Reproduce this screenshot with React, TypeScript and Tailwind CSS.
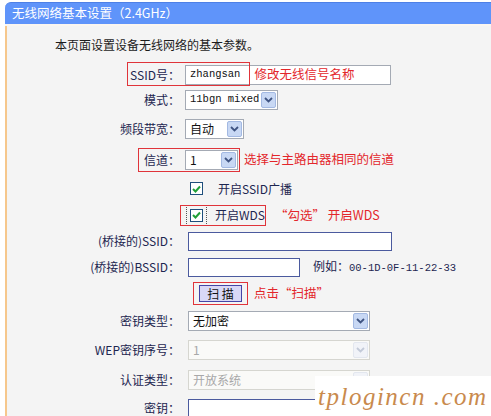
import React from 'react';

const cjk = { fontFamily: '"Noto Sans CJK SC", "Liberation Sans", sans-serif' };
const mono = { fontFamily: '"Liberation Mono", "Noto Sans CJK SC", monospace' };

const Arrow: React.FC<{ faded?: boolean }> = ({ faded }) => (
  <div
    className={`w-[15px] h-[16px] mr-[1px] rounded-[2px] border flex items-center justify-center ${
      faded ? 'bg-[#f1f3f8] border-[#e3e7ef]' : 'bg-[#c8d8f4] border-[#a3b9e2]'
    }`}
  >
    <svg width="9" height="6" viewBox="0 0 9 6">
      <path d="M1 1 L4.5 4.5 L8 1" fill="none" stroke={faded ? '#c3cad8' : '#3f5482'} strokeWidth="1.8" />
    </svg>
  </div>
);

const Select: React.FC<{ w: string; text: string; disabled?: boolean; monoText?: boolean }> = ({ w, text, disabled, monoText }) => (
  <div
    className={`${w} h-[20px] border flex items-center justify-between ${
      disabled ? 'bg-[#fafaf8] border-[#d6d6d0]' : 'bg-white border-[#a4aab4]'
    }`}
  >
    <span
      className={`pl-[4px] text-[12px] leading-none ${disabled ? 'text-[#a8a8a8]' : 'text-[#111]'}`}
      style={monoText ? { ...mono, fontSize: '10.5px' } : cjk}
    >
      {text}
    </span>
    <Arrow faded={disabled} />
  </div>
);

const Label: React.FC<{ children: React.ReactNode }> = ({ children }) => (
  <div className="w-[173px] shrink-0 text-right text-[12px] text-[#1d2650] leading-none" style={cjk}>
    {children}
  </div>
);

const Red: React.FC<{ children: React.ReactNode; className?: string }> = ({ children, className }) => (
  <span className={`text-[12.5px] text-[#e3262b] leading-none whitespace-nowrap ${className ?? ''}`} style={cjk}>
    {children}
  </span>
);

const Check: React.FC = () => (
  <div className="w-[13px] h-[13px] bg-white border border-[#1f4f7c] flex items-center justify-center">
    <svg width="9" height="8" viewBox="0 0 9 8">
      <path d="M1 4 L3.5 6.5 L8 1.5" fill="none" stroke="#21a038" strokeWidth="2" />
    </svg>
  </div>
);

export default function App() {
  return (
    <div className="w-[491px] h-[416px] bg-white relative overflow-hidden">
      <div className="ml-[5px] mt-[2px] h-[22px] bg-[#5f94fa] border-t border-[#4e80e6] rounded-tl-[6px] flex items-center pl-[7px]">
        <span className="text-white text-[12.5px] leading-none" style={cjk}>
          无线网络基本设置（2.4GHz）
        </span>
      </div>
      <div className="ml-[5px] h-[2px] bg-[#fbf6f0]" />
      <div className="ml-[5px] border-l-2 border-[#f6c78c] bg-[#f4f4f4] h-[400px]">
        <div className="h-[37px] flex items-center pl-[48px]">
          <span className="text-[12px] text-[#1c1c1c] leading-none" style={cjk}>
            本页面设置设备无线网络的基本参数。
          </span>
        </div>

        {/* SSID */}
        <div className="h-[23px] flex items-center relative">
          <Label>SSID号：</Label>
          <div className="ml-[5px] w-[206px] h-[20px] bg-white border border-[#a4aab4] flex items-center">
            <span className="pl-[4px] text-[#111] leading-none" style={{ ...mono, fontSize: '10.5px' }}>
              zhangsan
            </span>
            <Red className="ml-[14px]">修改无线信号名称</Red>
          </div>
          <div className="absolute left-[120px] top-[-1px] w-[123px] h-[24px] border border-[#e0343a]" />
        </div>

        {/* 模式 */}
        <div className="h-[27px] flex items-center">
          <Label>模式：</Label>
          <div className="ml-[5px]">
            <Select w="w-[93px]" text="11bgn mixed" monoText />
          </div>
        </div>

        {/* 频段带宽 */}
        <div className="h-[31px] flex items-center">
          <Label>频段带宽：</Label>
          <div className="ml-[5px]">
            <Select w="w-[59px]" text="自动" />
          </div>
        </div>

        {/* 信道 */}
        <div className="h-[31px] flex items-center relative">
          <Label>信道：</Label>
          <div className="ml-[5px]">
            <Select w="w-[53px]" text="1" />
          </div>
          <Red className="ml-[6px]">选择与主路由器相同的信道</Red>
          <div className="absolute left-[131px] top-[4px] w-[102px] h-[24px] border border-[#e0343a]" />
        </div>

        {/* SSID广播 */}
        <div className="h-[27px] flex items-center pl-[183px]">
          <Check />
          <span className="ml-[15px] text-[12px] text-[#1d2650] leading-none" style={cjk}>
            开启SSID广播
          </span>
        </div>

        {/* WDS */}
        <div className="h-[26px] flex items-center pl-[183px] relative">
          <div className="p-[3px] border border-dotted border-[#555] -ml-[4px]">
            <Check />
          </div>
          <span className="ml-[8px] text-[12px] text-[#1d2650] leading-none" style={cjk}>
            开启WDS
          </span>
          <Red className="ml-[10px]">“勾选” 开启WDS</Red>
          <div className="absolute left-[173px] top-[3px] w-[86px] h-[21px] border border-[#e0343a]" />
        </div>

        {/* 桥接SSID */}
        <div className="h-[26px] flex items-center">
          <Label>(桥接的)SSID：</Label>
          <div className="ml-[8px] w-[204px] h-[19px] bg-white border border-[#4b5a9e]" />
        </div>

        {/* 桥接BSSID */}
        <div className="h-[26px] flex items-center">
          <Label>(桥接的)BSSID：</Label>
          <div className="ml-[8px] w-[112px] h-[19px] bg-white border border-[#4b5a9e]" />
          <span className="ml-[13px] text-[12px] text-[#1d2650] leading-none" style={cjk}>
            例如：
            <span style={{ ...mono, fontSize: '10.5px' }}>00-1D-0F-11-22-33</span>
          </span>
        </div>

        {/* 扫描 */}
        <div className="h-[27px] flex items-center pl-[186px]">
          <div className="border border-[#e0343a] px-[5px] py-[2px]">
            <div className="w-[43px] h-[17px] bg-[#d8d8f6] border border-[#4444a6] flex items-center justify-center">
              <span className="text-[12px] text-[#111] leading-none" style={cjk}>
                扫 描
              </span>
            </div>
          </div>
          <Red className="ml-[6px]">点击“扫描”</Red>
        </div>

        {/* 密钥类型 */}
        <div className="h-[28px] flex items-center">
          <Label>密钥类型：</Label>
          <div className="ml-[8px]">
            <Select w="w-[182px]" text="无加密" />
          </div>
        </div>

        {/* WEP密钥序号 */}
        <div className="h-[30px] flex items-center">
          <Label>WEP密钥序号：</Label>
          <div className="ml-[8px]">
            <Select w="w-[182px]" text="1" disabled />
          </div>
        </div>

        {/* 认证类型 */}
        <div className="h-[30px] flex items-center">
          <Label>认证类型：</Label>
          <div className="ml-[8px]">
            <Select w="w-[182px]" text="开放系统" disabled />
          </div>
        </div>

        {/* 密钥 */}
        <div className="h-[26px] flex items-center">
          <Label>密钥：</Label>
          <div className="ml-[8px] w-[204px] h-[19px] bg-white border border-[#4b5a9e]" />
        </div>
      </div>

      {/* watermark */}
      <div className="absolute left-[315px] top-[376px] w-[176px] h-[40px] bg-white flex items-center pl-[3px] overflow-hidden">
        <span
          className="italic text-[25px] text-[#c98a4d] tracking-[1.5px] leading-none whitespace-nowrap"
          style={{ fontFamily: '"Liberation Serif", serif' }}
        >
          tplogincn .com
        </span>
      </div>
    </div>
  );
}
